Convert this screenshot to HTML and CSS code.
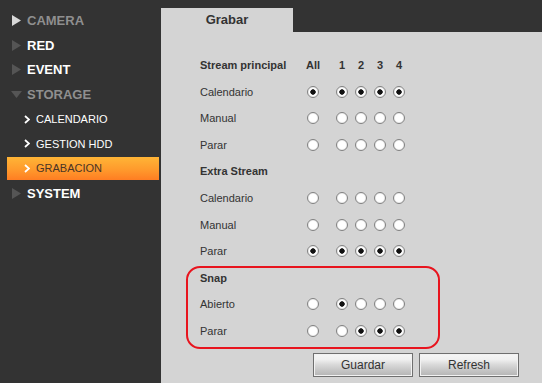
FILE: index.html
```html
<!DOCTYPE html>
<html lang="es">
<head>
    <meta charset="UTF-8">
    <title>Grabar</title>
    <link rel="stylesheet" href="styles.css">
</head>
<body>
    <div class="sidebar">
        <div class="nav-item muted">
            <svg class="tri" width="9" height="11" viewBox="0 0 9 11"><polygon points="0,0 9,5.5 0,11" fill="#d8d8d8"/></svg>
            CAMERA
        </div>
        <div class="nav-item">
            <svg class="tri" width="9" height="11" viewBox="0 0 9 11"><polygon points="0,0 9,5.5 0,11" fill="#555"/></svg>
            RED
        </div>
        <div class="nav-item">
            <svg class="tri" width="9" height="11" viewBox="0 0 9 11"><polygon points="0,0 9,5.5 0,11" fill="#555"/></svg>
            EVENT
        </div>
        <div class="nav-item muted open">
            <svg class="tri down" width="11" height="7" viewBox="0 0 11 7"><polygon points="0,0 11,0 5.5,7" fill="#555"/></svg>
            STORAGE
        </div>
        <div class="nav-sub">
            <svg class="chev" width="6" height="9" viewBox="0 0 6 9"><polyline points="1,1 5,4.5 1,8" fill="none" stroke="#fff" stroke-width="1.8"/></svg>
            CALENDARIO
        </div>
        <div class="nav-sub">
            <svg class="chev" width="6" height="9" viewBox="0 0 6 9"><polyline points="1,1 5,4.5 1,8" fill="none" stroke="#fff" stroke-width="1.8"/></svg>
            GESTION HDD
        </div>
        <div class="nav-sub active">
            <svg class="chev" width="6" height="9" viewBox="0 0 6 9"><polyline points="1,1 5,4.5 1,8" fill="none" stroke="#fff" stroke-width="1.8"/></svg>
            GRABACION
        </div>
        <div class="nav-item">
            <svg class="tri" width="9" height="11" viewBox="0 0 9 11"><polygon points="0,0 9,5.5 0,11" fill="#555"/></svg>
            SYSTEM
        </div>
    </div>

    <div class="main">
        <div class="tabs">
            <div class="tab">Grabar</div>
        </div>
        <div class="panel">
            <div class="form">
                <div class="row head">
                    <span class="label">Stream principal</span>
                    <span class="col">All</span>
                    <span class="col">1</span>
                    <span class="col">2</span>
                    <span class="col">3</span>
                    <span class="col">4</span>
                </div>
                <div class="row">
                    <span class="label">Calendario</span>
                    <input type="radio" checked><input type="radio" checked><input type="radio" checked><input type="radio" checked><input type="radio" checked>
                </div>
                <div class="row">
                    <span class="label">Manual</span>
                    <input type="radio"><input type="radio"><input type="radio"><input type="radio"><input type="radio">
                </div>
                <div class="row">
                    <span class="label">Parar</span>
                    <input type="radio"><input type="radio"><input type="radio"><input type="radio"><input type="radio">
                </div>

                <div class="row head">
                    <span class="label">Extra Stream</span>
                </div>
                <div class="row">
                    <span class="label">Calendario</span>
                    <input type="radio"><input type="radio"><input type="radio"><input type="radio"><input type="radio">
                </div>
                <div class="row">
                    <span class="label">Manual</span>
                    <input type="radio"><input type="radio"><input type="radio"><input type="radio"><input type="radio">
                </div>
                <div class="row">
                    <span class="label">Parar</span>
                    <input type="radio" checked><input type="radio" checked><input type="radio" checked><input type="radio" checked><input type="radio" checked>
                </div>

                <div class="group">
                    <div class="row head">
                        <span class="label">Snap</span>
                    </div>
                    <div class="row">
                        <span class="label">Abierto</span>
                        <input type="radio"><input type="radio" checked><input type="radio"><input type="radio"><input type="radio">
                    </div>
                    <div class="row">
                        <span class="label">Parar</span>
                        <input type="radio"><input type="radio"><input type="radio" checked><input type="radio" checked><input type="radio" checked>
                    </div>
                    <div class="highlight"></div>
                </div>
            </div>

            <div class="actions">
                <button class="btn">Guardar</button>
                <button class="btn">Refresh</button>
            </div>
        </div>
    </div>
</body>
</html>
```

FILE: styles.css
```css
html, body {
    height: 100%;
}
body {
    margin: 0;
    background-color: #333333;
    font-family: "Liberation Sans", Arial, sans-serif;
    display: flex;
    overflow: hidden;
}

/* sidebar */
.sidebar {
    width: 161px;
    flex-shrink: 0;
    padding-top: 8px;
    box-sizing: border-box;
}
.nav-item {
    height: 24.7px;
    display: flex;
    align-items: center;
    padding-left: 12px;
    font-size: 13px;
    font-weight: bold;
    color: #ffffff;
}
.nav-item.muted {
    color: #8f8f8f;
}
.nav-item .tri {
    margin-right: 6px;
}
.nav-item .tri.down {
    margin-left: -1px;
    margin-right: 5px;
}
.nav-sub {
    height: 24.7px;
    display: flex;
    align-items: center;
    padding-left: 24px;
    font-size: 11px;
    color: #ffffff;
    box-sizing: border-box;
}
.nav-sub .chev {
    margin-right: 6px;
}
.nav-sub.active {
    margin: 0 2px 0 7px;
    padding-left: 17px;
    border-top: 1.3px solid transparent;
    border-bottom: 1.3px solid transparent;
    background-clip: padding-box;
    background-image: linear-gradient(#ffb536 0%, #ffa631 30%, #ff9a2c 55%, #ff8a27 80%, #ff7d22 100%);
    color: #4a3526;
}

/* main area */
.main {
    flex: 1;
    margin-top: 8px;
    display: flex;
    flex-direction: column;
}
.tabs {
    height: 24px;
    display: flex;
}
.tab {
    width: 132px;
    background-color: #d4d4d4;
    text-align: center;
    font-size: 13px;
    font-weight: bold;
    color: #333;
    line-height: 24px;
}
.panel {
    flex: 1;
    background-color: #d4d4d4;
    padding-top: 19.7px;
    padding-left: 39px;
}

.row {
    height: 26.6px;
    display: grid;
    grid-template-columns: 107px 29px 19px 19px 19px 12px;
    align-items: center;
    font-size: 11px;
    color: #333;
}
.row.head {
    font-weight: bold;
}
.row .col {
    width: 12px;
    display: flex;
    justify-content: center;
    white-space: nowrap;
}

input[type="radio"] {
    -webkit-appearance: none;
    appearance: none;
    margin: 0;
    width: 12px;
    height: 12px;
    border: 1px solid #808080;
    border-radius: 50%;
    background-color: #ffffff;
    box-sizing: border-box;
    box-shadow: inset 0 0 0 1px #ededed;
}
input[type="radio"]:checked {
    background-image: radial-gradient(circle, #111 0, #111 2.4px, #fff 3px);
}

.group {
    position: relative;
}
.highlight {
    position: absolute;
    top: 1.3px;
    left: -14px;
    width: 254px;
    bottom: -4.4px;
    border: 2.5px solid #e8141e;
    border-radius: 14px;
    box-sizing: border-box;
}

/* buttons */
.actions {
    display: flex;
    gap: 6px;
    margin-top: 8.7px;
    margin-left: 113px;
}
.btn {
    width: 100px;
    height: 24px;
    font-family: "Liberation Sans", Arial, sans-serif;
    font-size: 12px;
    color: #333;
    border: 1px solid #6f6f6f;
    box-shadow: inset 0 0 0 1px #f2f2f2;
    background-image: linear-gradient(#f6f6f6 0%, #f0f0f0 25%, #dcdcdc 45%, #c8c8c8 70%, #b4b4b4 100%);
    padding: 0;
}
```
